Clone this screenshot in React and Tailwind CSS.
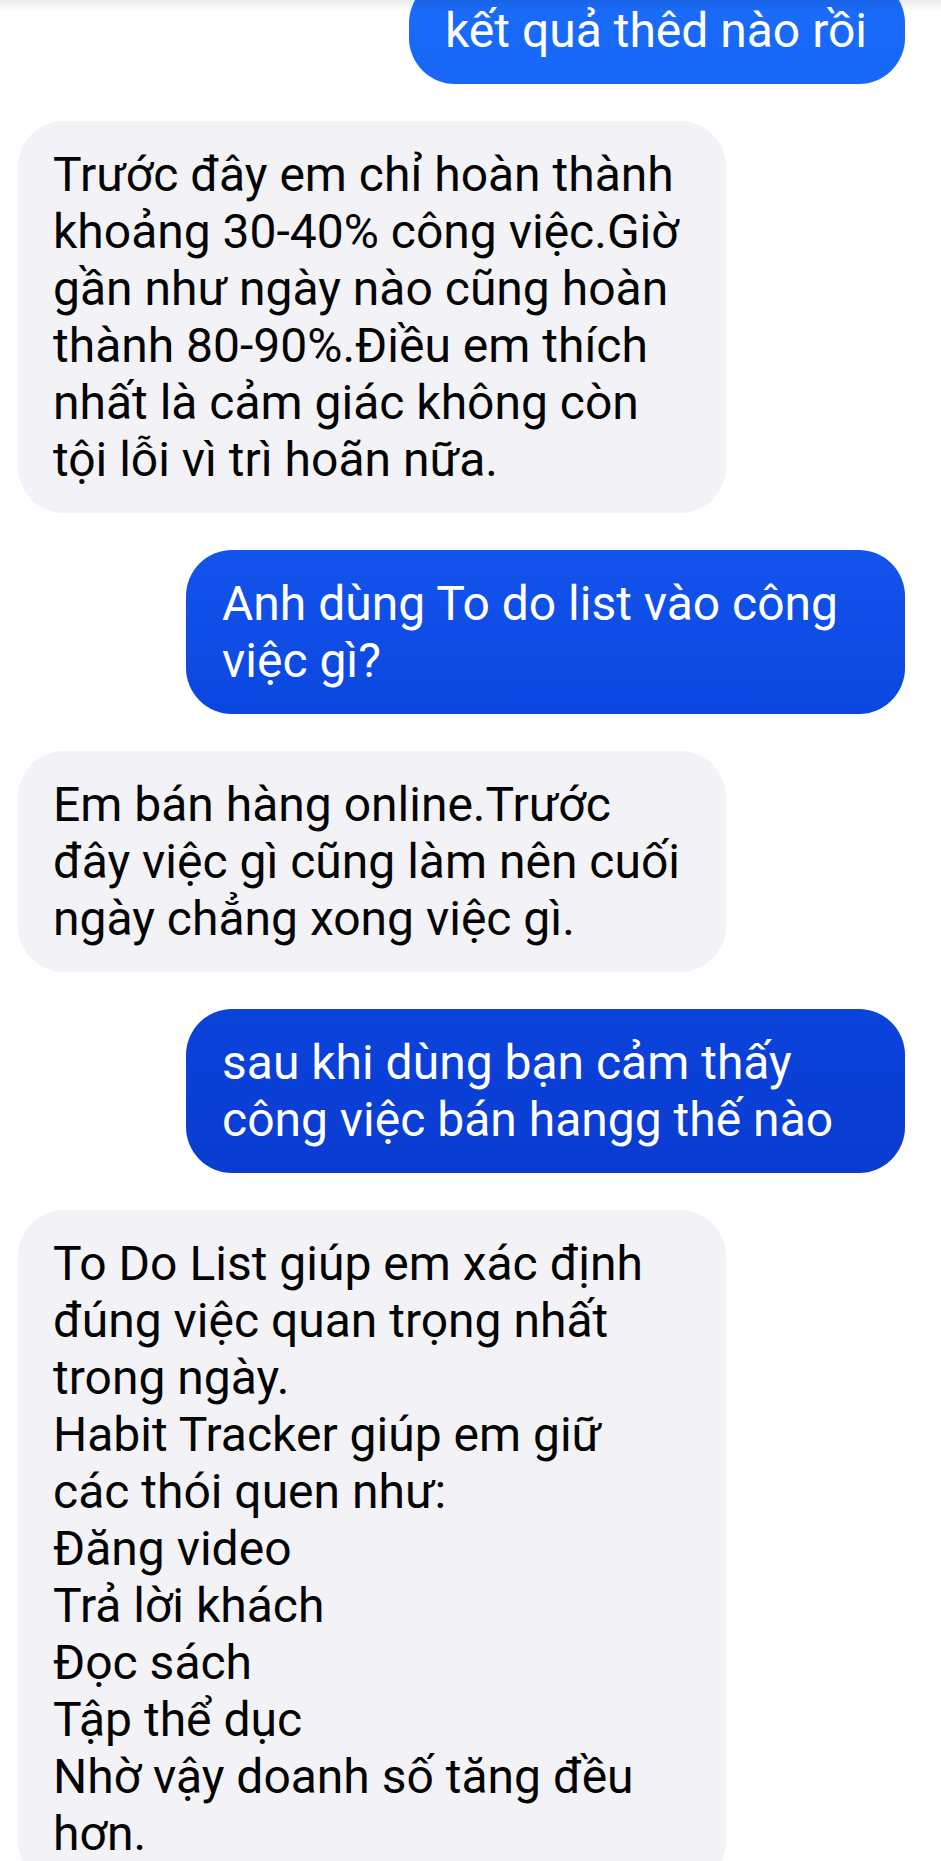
import React from 'react';

const messages = [
  { from: 'me', tone: 'bg-gradient-to-b from-[#1b6dfb] to-[#1867f8]', lines: ['kết quả thêd nào rồi'], first: true },
  {
    from: 'them',
    lines: [
      'Trước đây em chỉ hoàn thành',
      'khoảng 30-40% công việc.Giờ',
      'gần như ngày nào cũng hoàn',
      'thành 80-90%.Điều em thích',
      'nhất là cảm giác không còn',
      'tội lỗi vì trì hoãn nữa.',
    ],
  },
  { from: 'me', tone: 'bg-gradient-to-b from-[#1454ec] to-[#0a47e0]', lines: ['Anh dùng To do list vào công', 'việc gì?'] },
  {
    from: 'them',
    lines: ['Em bán hàng online.Trước', 'đây việc gì cũng làm nên cuối', 'ngày chẳng xong việc gì.'],
  },
  { from: 'me', tone: 'bg-gradient-to-b from-[#0b43db] to-[#0a3cd2]', lines: ['sau khi dùng bạn cảm thấy', 'công việc bán hangg thế nào'] },
  {
    from: 'them',
    lines: [
      'To Do List giúp em xác định',
      'đúng việc quan trọng nhất',
      'trong ngày.',
      'Habit Tracker giúp em giữ',
      'các thói quen như:',
      'Đăng video',
      'Trả lời khách',
      'Đọc sách',
      'Tập thể dục',
      'Nhờ vậy doanh số tăng đều',
      'hơn.',
    ],
  },
];

const Bubble = ({ msg }) => {
  const mine = msg.from === 'me';
  return (
    <div className={`flex ${mine ? 'justify-end pr-[36px]' : 'justify-start pl-[18px]'} ${msg.first ? '-mt-[23px]' : ''}`}>
      <div
        className={
          mine
            ? `${msg.tone} text-white rounded-[46px] py-[25px] pl-[36px] pr-[38px] max-w-[719px] ${msg.lines.length > 1 ? 'w-[719px]' : ''}`
            : 'bg-[#f2f2f7] text-[#050505] rounded-[46px] py-[25px] pl-[35px] pr-[30px] w-[708px]'
        }
      >
        {msg.lines.map((l, i) => (
          <div key={i} className="whitespace-nowrap">{l}</div>
        ))}
      </div>
    </div>
  );
};

export default function App() {
  return (
    <div className="relative w-[941px] h-[1861px] overflow-hidden bg-white font-['Roboto',sans-serif] text-[48px] leading-[57px]">
      <div className="flex flex-col gap-[37px]">
        {messages.map((m, i) => (
          <Bubble key={i} msg={m} />
        ))}
      </div>
      <div className="pointer-events-none absolute top-0 left-0 right-0 h-[12px] bg-gradient-to-b from-[rgba(0,0,0,0.08)] to-transparent" />
    </div>
  );
}
